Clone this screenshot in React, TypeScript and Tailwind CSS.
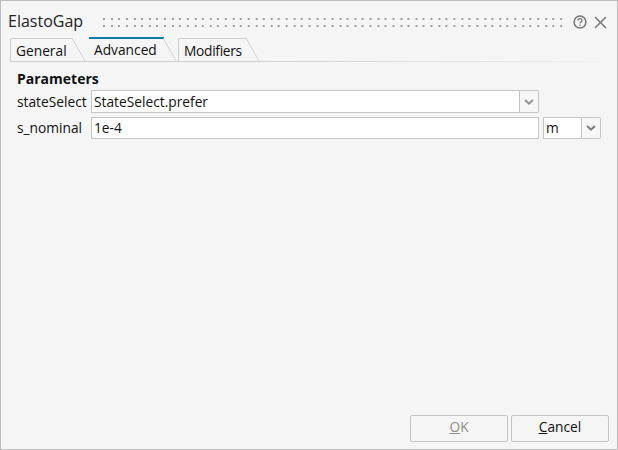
const font = "font-['Open_Sans','Noto_Sans',sans-serif]";

function Tab({ label, active, width, textClass = "" }: { label: string; active?: boolean; width: string; textClass?: string }) {
  return (
    <div className={`relative h-full ${width}`}>
      {active ? (
        <div className="h-full w-full border-t-2 border-[#0f7fa8] pl-[5px] pt-[1px] text-[13.75px] leading-[20px] text-[#111]">{label}</div>
      ) : (
        <div className={`mt-[1px] h-[23px] w-full border-l border-t border-[#cfcfcf] pl-[5px] pt-[2px] text-[13.75px] leading-[20px] text-[#111] ${textClass}`}>{label}</div>
      )}
      <svg className="absolute right-[-13px] top-0 h-[25px] w-[14px]" viewBox="0 0 14 25" fill="none">
        <path d="M0 1 L13 24" stroke="#d0d0d0" />
      </svg>
    </div>
  );
}

function DropButton({ dark }: { dark?: boolean }) {
  return (
    <div className="flex w-[19px] items-center justify-center rounded-r-[2px] border border-l-0 border-[#c4c4c4] bg-[#f7f7f7]">
      <svg width="10" height="6" viewBox="0 0 10 6" fill="none">
        <path d="M1 1L5 4.6L9 1" stroke={dark ? "#808080" : "#969696"} strokeWidth="2" />
      </svg>
    </div>
  );
}

function Grip() {
  const cols = Array.from({ length: 61 }, (_, i) => i);
  return (
    <svg width="462" height="9" viewBox="0 0 462 9">
      {cols.map((i) => (
        <g key={i} fill="#a0a0a0">
          <rect x={1 + Math.round(i * 7.63)} y="0" width="2" height="2" />
          <rect x={1 + Math.round(i * 7.63)} y="7" width="2" height="2" />
        </g>
      ))}
    </svg>
  );
}

export default function App() {
  return (
    <div className={`${font} flex h-[450px] w-[618px] flex-col border border-[#bdbdbd] bg-[#f5f5f5] text-[#111]`}>
      <div className="flex h-[36px] items-center pl-[7px] pr-[10px] pt-[6px]">
        <span className="-mt-[2px] w-[94px] text-[16px] leading-[24px] text-[#222]">ElastoGap</span>
        <Grip />
        <svg className="ml-[10px]" width="14" height="14" viewBox="0 0 14 14" fill="none">
          <circle cx="7" cy="7" r="5.9" stroke="#757575" strokeWidth="1.5" />
          <path d="M5 5.5C5 3 9 3 9 5.5C9 7 7 7 7 8.6" stroke="#757575" strokeWidth="1.3" />
          <rect x="6.3" y="9.6" width="1.4" height="1.4" fill="#757575" />
        </svg>
        <svg className="ml-[7px]" width="13" height="13" viewBox="0 0 13 13" fill="none">
          <path d="M1 1L12 12M12 1L1 12" stroke="#777" strokeWidth="1.5" />
        </svg>
      </div>

      <div className="ml-[9px] mr-[16px] h-[25px] bg-[linear-gradient(to_right,#d0d0d0,#d0d0d0_40%,#f0f0f0)] pb-px">
        <div className="flex h-full bg-[#f5f5f5]">
          <Tab label="General" width="w-[63px] mr-[16px]" />
          <Tab label="Advanced" active width="w-[75px] mr-[14px]" />
          <Tab label="Modifiers" width="w-[69px]" textClass="tracking-[-0.3px]" />
        </div>
      </div>

      <div className="flex flex-1 flex-col pl-[16px] pr-[16px]">
        <div className="mt-[7px] text-[14px] font-bold leading-[20px]">Parameters</div>
        <div className="mt-[1px] flex h-[23px]">
          <span className="w-[74px] text-[13.75px] leading-[23px]">stateSelect</span>
          <div className="w-[429px] border border-[#c4c4c4] bg-white pl-[2px] text-[13.75px] leading-[21px]">StateSelect.prefer</div>
          <DropButton />
        </div>
        <div className="mt-[4px] flex h-[22px]">
          <span className="w-[74px] text-[13.75px] leading-[22px]">s_nominal</span>
          <div className="w-[448px] border border-[#c4c4c4] bg-white pl-[2px] text-[13.75px] leading-[20px]">1e-4</div>
          <div className="ml-[4px] flex">
            <div className="w-[39px] border border-[#c4c4c4] bg-white pl-[2px] text-[13.75px] leading-[20px]">m</div>
            <DropButton dark />
          </div>
        </div>

        <div className="mt-auto mb-[7px] -mr-[8px] flex justify-end gap-[3px]">
          <div className="flex h-[27px] w-[98px] items-center justify-center rounded-[2px] border border-[#c4c4c4] pb-[2px] text-[13.75px] text-[#8c8c8c]">
            <span><span className="underline">O</span>K</span>
          </div>
          <div className="flex h-[27px] w-[98px] items-center justify-center rounded-[2px] border border-[#c4c4c4] pb-[2px] text-[13.75px] text-[#111]">
            <span><span className="underline">C</span>ancel</span>
          </div>
        </div>
      </div>
    </div>
  );
}
